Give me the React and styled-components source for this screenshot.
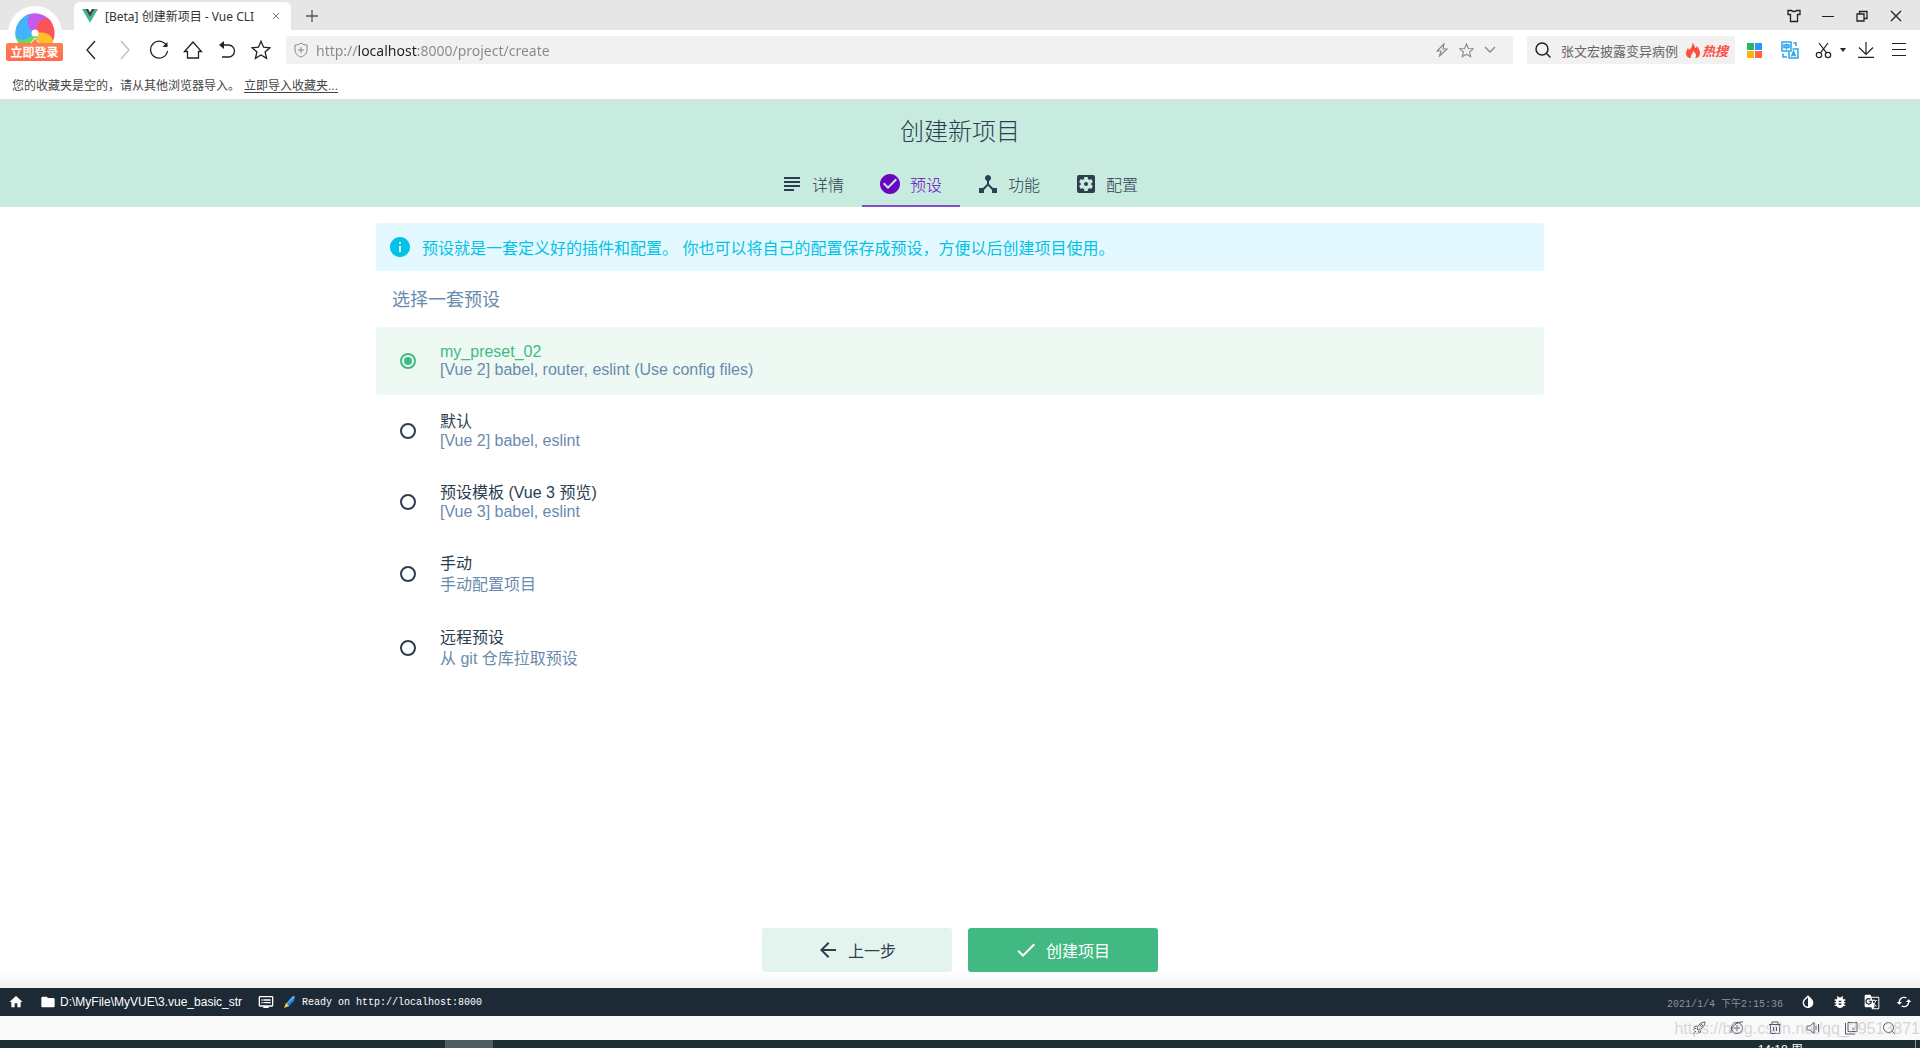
import { useState } from 'react';
import styled, { createGlobalStyle } from 'styled-components';
import {
  MdSubject,
  MdCheckCircle,
  MdDeviceHub,
  MdSettingsApplications,
  MdInfo,
  MdArrowBack,
  MdDone,
  MdHome,
  MdFolder,
  MdDvr,
  MdInvertColors,
  MdBugReport,
  MdGTranslate,
  MdCached,
} from 'react-icons/md';

const GlobalStyle = createGlobalStyle`
  * {
    box-sizing: border-box;
  }

  body {
    margin: 0;
    background: #ffffff;
    font-family: 'Liberation Sans', 'Noto Sans CJK SC', sans-serif;
    font-size: 16px;
    color: #2c3e50;
  }

  button,
  input {
    font: inherit;
    color: inherit;
    border: 0;
    padding: 0;
    margin: 0;
    background: none;
    outline: none;
  }

  button {
    cursor: pointer;
  }
`;

const Screen = styled.div`
  position: relative;
  display: flex;
  flex-direction: column;
  height: 100vh;
  padding-right: 8px;
  overflow: hidden;
`;

/* ---------- browser chrome ---------- */

const TabStrip = styled.div`
  display: flex;
  align-items: flex-end;
  height: 30px;
  padding-left: 74px;
  background: #e6e6e6;
  font-family: 'Noto Sans', 'Noto Sans CJK SC', sans-serif;
`;

const BrowserTab = styled.div`
  display: flex;
  align-items: center;
  width: 217px;
  height: 28px;
  padding: 0 10px 0 8px;
  gap: 7px;
  border-radius: 6px 6px 0 0;
  background: #ffffff;
  font-size: 12px;
  color: #333333;

  span {
    flex: 1;
    white-space: nowrap;
  }
`;

const IconButton = styled.button`
  display: flex;
  align-items: center;
  justify-content: center;
  flex: none;
  width: ${(props) => props.$width || 34}px;
  height: ${(props) => props.$height || 28}px;
  color: ${(props) => props.$color || '#222222'};
`;

const WindowControls = styled.div`
  display: flex;
  margin-left: auto;
  padding-right: 7px;
`;

const LoginButton = styled.button`
  position: absolute;
  left: 6px;
  top: 6px;
  display: flex;
  flex-direction: column;
  align-items: center;
  width: 57px;
  height: 55px;
`;

const LoginLabel = styled.span`
  position: absolute;
  left: 0;
  bottom: 0;
  width: 100%;
  height: 18px;
  border-radius: 2px;
  background: linear-gradient(#ff8152, #ff6a50);
  color: #ffffff;
  font-family: 'Noto Sans CJK SC', sans-serif;
  font-size: 12px;
  font-weight: 700;
  line-height: 18px;
  text-align: center;
`;

const Toolbar = styled.div`
  display: flex;
  align-items: center;
  height: 40px;
  padding: 0 8px 0 74px;
`;

const AddressBar = styled.label`
  display: flex;
  align-items: center;
  flex: 1;
  height: 28px;
  margin: 0 14px 0 8px;
  padding: 0 11px 0 8px;
  border-radius: 2px;
  background: #f1f1f1;
  color: #888888;
`;

/* scheme and path are greyed out, the host stays dark */
const AddressInput = styled.input`
  flex: 1;
  min-width: 0;
  height: 28px;
  margin-left: 8px;
  font-family: 'Noto Sans', 'Noto Sans CJK SC', sans-serif;
  font-size: 14px;
  color: transparent;
  background: linear-gradient(90deg, #888888 42px, #222222 42px 102px, #888888 102px);
  background-clip: text;
  -webkit-background-clip: text;
`;

const SearchBox = styled.label`
  display: flex;
  align-items: center;
  width: 208px;
  height: 28px;
  padding: 0 7px 0 8px;
  border-radius: 2px;
  background: #f1f1f1;
  color: #222222;
`;

const SearchInput = styled.input`
  flex: 1;
  min-width: 0;
  margin-left: 9px;
  font-family: 'Noto Sans CJK SC', sans-serif;
  font-size: 13px;

  &::placeholder {
    color: #666666;
    opacity: 1;
  }
`;

const HotLink = styled.a`
  display: flex;
  align-items: center;
  gap: 2px;
  color: #ff4c40;
  font-family: 'Noto Sans CJK SC', sans-serif;
  font-size: 13px;
  font-style: italic;
  font-weight: 700;
  text-decoration: none;
`;

const ToolbarExtras = styled.div`
  display: flex;
  align-items: center;
  margin-left: 2px;
`;

const Bookmarks = styled.div`
  display: flex;
  align-items: center;
  gap: 4px;
  height: 30px;
  padding: 0 0 1px 12px;
  border-bottom: 1px solid #e3e3e3;
  font-size: 12px;
  color: #444444;

  a {
    color: inherit;
    text-underline-offset: 2px;
  }
`;

/* ---------- project creation page ---------- */

const Header = styled.header`
  height: 107px;
  background: #c7ebdf;
`;

const Title = styled.h1`
  margin: 0;
  height: 63px;
  font-size: 24px;
  font-weight: 300;
  line-height: 63px;
  text-align: center;
`;

const Tabs = styled.nav`
  display: flex;
  justify-content: center;
`;

const Tab = styled.button`
  display: flex;
  align-items: center;
  gap: 8px;
  height: 44px;
  padding: 0 18px 0 16px;
  border-bottom: 2px solid ${(props) => (props.$active ? '#7f50c8' : 'transparent')};
  color: ${(props) => (props.$active ? '#6806c1' : '#2c3e50')};
  font-weight: 300;
`;

const Content = styled.main`
  flex: 1;
  width: 100%;
  max-width: 1200px;
  margin: 0 auto;
  padding: 16px;
`;

const Alert = styled.div`
  display: flex;
  align-items: center;
  gap: 10px;
  height: 48px;
  padding: 0 12px;
  border-radius: 3px;
  background: #e4f9ff;
  color: #03c2e6;
`;

const PresetGroup = styled.fieldset`
  margin: 0;
  padding: 0;
  border: 0;
`;

const GroupTitle = styled.legend`
  height: 56px;
  padding: 0 16px;
  color: #6a8bad;
  font-size: 18px;
  line-height: 58px;
`;

const PresetRow = styled.label`
  display: flex;
  align-items: center;
  gap: 24px;
  padding: 16px 24px;
  border-radius: 3px;
  background: ${(props) => (props.$selected ? '#eef9f4' : 'transparent')};
  cursor: pointer;
`;

const Radio = styled.input`
  appearance: none;
  flex: none;
  width: 16px;
  height: 16px;
  border: 2px solid #2c3e50;
  border-radius: 50%;

  &:checked {
    border-color: #42b983;
    background: #42b983;
    background-clip: content-box;
    padding: 2px;
  }
`;

const PresetName = styled.div`
  line-height: ${(props) => (props.$cjk ? 21 : 18)}px;
  color: ${(props) => (props.$selected ? '#42b983' : '#2c3e50')};
`;

const PresetDescription = styled.div`
  line-height: ${(props) => (props.$cjk ? 21 : 18)}px;
  color: #6a8bad;
`;

const Actions = styled.div`
  display: flex;
  justify-content: center;
  gap: 16px;
  padding: 16px;
  background: linear-gradient(transparent 80%, #f0f0f0);
`;

const ActionButton = styled.button`
  display: flex;
  align-items: center;
  justify-content: center;
  gap: 8px;
  width: 190px;
  height: 44px;
  padding-right: 2px;
  border-radius: 3px;
  background: ${(props) => (props.$primary ? '#42b983' : '#e3f4ee')};
  color: ${(props) => (props.$primary ? '#ffffff' : '#2c3e50')};
`;

const StatusBar = styled.footer`
  display: flex;
  align-items: center;
  height: 28px;
  padding: 0 8px;
  background: #1d2935;
  color: #ffffff;
  font-size: 12px;
`;

const StatusItem = styled.button`
  display: flex;
  align-items: center;
  gap: 4px;
  margin-right: ${(props) => props.$after || 0}px;
`;

const LogLine = styled.span`
  display: flex;
  align-items: center;
  gap: 6px;
  font-family: 'Liberation Mono', 'Noto Sans CJK SC', monospace;
  font-size: 10px;
`;

const StatusRight = styled.div`
  display: flex;
  align-items: center;
  gap: 16px;
  margin-left: auto;

  time {
    margin-right: 1px;
    color: #8c949b;
    font-family: 'Liberation Mono', 'Noto Sans CJK SC', monospace;
    font-size: 10px;
  }
`;

/* ---------- bottom of the browser and the system taskbar ---------- */

const BrowserFooter = styled.div`
  display: flex;
  align-items: center;
  justify-content: flex-end;
  position: relative;
  height: 24px;
  padding-right: 12px;
  background: #f9f9f9;
`;

const Watermark = styled.span`
  position: absolute;
  right: 0;
  top: 2px;
  color: rgba(190, 190, 190, 0.6);
  font-size: 16px;
  line-height: 22px;
  pointer-events: none;
`;

const Taskbar = styled.div`
  display: flex;
  height: 8px;
  padding-right: 4px;
  overflow: hidden;
  background: #1c3033;
`;

const TaskbarApp = styled.div`
  width: 48px;
  margin-left: 445px;
  background: #4d5d60;
`;

const Clock = styled.time`
  margin-left: auto;
  padding: 3px 112px 0 0;
  border-right: 1px solid #8b9799;
  color: #ffffff;
  font-size: 12px;
  line-height: 14px;
`;

const Line = ({ w = 20, h = w, box = `0 0 ${w} ${h}`, sw = 1.3, children }) => (
  <svg width={w} height={h} viewBox={box} fill="none" stroke="currentColor" strokeWidth={sw}>
    {children}
  </svg>
);

const VueLogo = () => (
  <svg width="16" height="14" viewBox="0 0 16 14">
    <path d="M0 0h3.2L8 8.3 12.8 0H16L8 13.8z" fill="#41b883" />
    <path d="M3.2 0h3L8 3.2 9.8 0h3L8 8.3z" fill="#35495e" />
  </svg>
);

const PETALS = ['#c25cf0', '#fb5458', '#ffc02c', '#62dc5c', '#42b4fb'];

const BrowserLogo = () => (
  <svg width="54" height="54" viewBox="0 0 54 54">
    <circle cx="27" cy="27" r="27" fill="#ffffff" />
    {PETALS.map((color, i) => (
      <path
        key={color}
        transform={`translate(27 27) rotate(${i * 72})`}
        d="M0 0C-9-4-13-11-10-17A20 20 0 0 1 17-10C9-13 1-9 0 0z"
        fill={color}
      />
    ))}
    <circle cx="27" cy="27" r="3.500" fill="#ffffff" />
    <path d="M27 32l5 6H22z" fill="#ff8152" stroke="#ffffff" strokeWidth="1" />
  </svg>
);

const STAR = 'M9 1.2l2.3 5.3 5.7.5-4.3 3.8 1.3 5.7L9 13.5l-5 3 1.3-5.7L1 7l5.7-.5z';

const WINDOW_BUTTONS = [
  { label: '皮肤', icon: <Line w={14}><path d="M4.5 1.5H1v4h2.500V12.500h7V5.500H13v-4H9.500c-1 1.300-4 1.300-5 0z" /></Line> },
  { label: '最小化', icon: <Line w={12} sw={1}><path d="M0 6.500h12" /></Line> },
  { label: '还原', icon: <Line w={12}><path d="M1 4h7v7H1zM3.500 4V1.500h7.500v7H8" /></Line> },
  { label: '关闭', icon: <Line w={12}><path d="M1 1l10 10M11 1L1 11" /></Line> },
];

const NAV_BUTTONS = [
  { label: '后退', icon: <Line><path d="M14 1L6 10l8 9" /></Line> },
  { label: '前进', color: '#bbbbbb', icon: <Line><path d="M6 1l8 9-8 9" /></Line> },
  { label: '刷新', icon: <Line><path d="M17.800 6A8.500 8.500 0 1 0 18.500 11" /><path d="M18.500 2v5h-5z" fill="currentColor" stroke="none" /></Line> },
  { label: '主页', icon: <Line><path d="M1.500 11.500L10 2l8.500 9.500h-3V18h-11v-6.500z" /></Line> },
  { label: '恢复', icon: <Line><path d="M5 5h6.500a6 6 0 0 1 0 12H5" /><path d="M7 1v8L2 5z" fill="currentColor" stroke="none" /></Line> },
  { label: '收藏', icon: <Line w={20} sw={1.200} box="0 0 18 18"><path d={STAR} /></Line> },
];

const FOOTER_BUTTONS = [
  { label: '加速', icon: <Line w={14} sw={1}><path d="M5 8c1-4 4-7 8-7 0 4-3 7-7 8zM5 5L2 6l2 2M9 9l-1 3-2-2M4 10l-3 3M6.500 11.500L5 13M2.500 7.500L1 9" /><circle cx="9.500" cy="4.500" r="1" /></Line> },
  { label: '新建', icon: <Line w={14} sw={1}><circle cx="7" cy="7" r="5.500" /><path d="M7 4v6M4 7h6M1 12C0 7 7 0 13 1" /></Line> },
  { label: '清理', icon: <Line w={14} sw={1}><path d="M1 3.500h12M4 3V1h6v2M2.500 3.500v9h9v-9M5.500 6v4M8.500 6v4" /></Line> },
  { label: '静音', icon: <Line w={14} sw={1}><path d="M1 5h3l4-3.500v11L4 9H1zM10 5v4M12.500 3v8" /></Line> },
  { label: '窗口', icon: <Line w={14} sw={1}><path d="M4 1.500h9v9H4zM1.500 2v11H11M8 8h2.500" /></Line> },
  { label: '缩放', icon: <Line w={14} sw={1}><circle cx="6.500" cy="6.500" r="5" /><path d="M10 10l3 3" /></Line> },
];

const STEPS = [
  { label: '详情', Icon: MdSubject },
  { label: '预设', Icon: MdCheckCircle, active: true },
  { label: '功能', Icon: MdDeviceHub },
  { label: '配置', Icon: MdSettingsApplications },
];

const PRESETS = [
  { id: 'my_preset_02', name: 'my_preset_02', description: '[Vue 2] babel, router, eslint (Use config files)' },
  { id: 'default', name: '默认', description: '[Vue 2] babel, eslint' },
  { id: 'vue3', name: '预设模板 (Vue 3 预览)', description: '[Vue 3] babel, eslint' },
  { id: 'manual', name: '手动', description: '手动配置项目' },
  { id: 'remote', name: '远程预设', description: '从 git 仓库拉取预设' },
];

const hasCjk = (text) => /[\u4e00-\u9fff]/.test(text);

function BrowserChrome() {
  return (
    <>
      <TabStrip>
        <BrowserTab>
          <VueLogo />
          <span>[Beta] 创建新项目 - Vue CLI</span>
          <IconButton $width={10} aria-label="关闭标签页" $color="#777777">
            <Line w={8} sw={1}><path d="M1 1l6 6M7 1L1 7" /></Line>
          </IconButton>
        </BrowserTab>
        <IconButton $width={42} aria-label="新标签页" $color="#555555">
          <Line w={12}><path d="M6 0v12M0 6h12" /></Line>
        </IconButton>
        <WindowControls>
          {WINDOW_BUTTONS.map(({ label, icon }) => (
            <IconButton key={label} aria-label={label}>{icon}</IconButton>
          ))}
        </WindowControls>
      </TabStrip>
      <Toolbar>
        {NAV_BUTTONS.map(({ label, icon, color }) => (
          <IconButton key={label} aria-label={label} $color={color}>{icon}</IconButton>
        ))}
        <AddressBar>
          <Line w={14} h={16} sw={1}>
            <path d="M7 1c2 1.500 4 2 6 2v5c0 3-2 5.500-6 7-4-1.500-6-4-6-7V3c2 0 4-.5 6-2zM7 5v6M4 8h6" />
          </Line>
          <AddressInput aria-label="地址" defaultValue="http://localhost:8000/project/create" />
          <IconButton $width={24} aria-label="极速模式" $color="#888888">
            <Line w={12} h={14} sw={1.200}><path d="M8 1L1 8h4l-1.500 5L11 6H7z" /></Line>
          </IconButton>
          <IconButton $width={24} aria-label="收藏此页" $color="#888888">
            <Line w={15} box="0 0 18 18"><path d={STAR} /></Line>
          </IconButton>
          <IconButton $width={24} aria-label="更多地址" $color="#888888">
            <Line w={12} h={8}><path d="M1 1l5 5 5-5" /></Line>
          </IconButton>
        </AddressBar>
        <SearchBox>
          <Line w={17} sw={1.500}><circle cx="7" cy="7" r="6" /><path d="M11.500 11.500l4 4" /></Line>
          <SearchInput aria-label="搜索" placeholder="张文宏披露变异病例" />
          <HotLink href="#hot">
            <svg width="14" height="15" viewBox="0 0 14 15">
              <path d="M6 0c3 2 3 4 3 5 1 0 2-1 2-2 2 3 3 5 3 7 0 3-2 5-5 5 2-2 1-5-2-7 0 3-3 4-2 7-3 0-5-2-5-5 0-2 1-3 2-5l1 2c2-2 4-4 3-7z" fill="#ff4c40" />
            </svg>
            热搜
          </HotLink>
        </SearchBox>
        <ToolbarExtras>
          <IconButton $width={35} aria-label="应用">
            <svg width="15" height="15" viewBox="0 0 15 15">
              <path d="M0 0h7v7H0z" fill="#25b864" />
              <path d="M8 0h7v7H8z" fill="#2b95ff" />
              <path d="M0 8h7v7H0z" fill="#ffb114" />
              <path d="M8 8h7v7H8z" fill="#ff6542" />
            </svg>
          </IconButton>
          <IconButton $width={35} aria-label="翻译" $color="#2ea4e6">
            <Line w={18} sw={1.500}>
              <path d="M1 1h9v9H1zM3 4h5v2.500H3zM5.500 2.500v6M8 11v6h9V8h-5.500M10.500 15.500l2-5 2 5M11 14h3M12.500 2H15v3M2 12.500V16h4" />
            </Line>
          </IconButton>
          <IconButton $width={33} aria-label="截图">
            <Line w={17} sw={1.200}>
              <circle cx="4" cy="13" r="2.700" />
              <circle cx="13" cy="13" r="2.700" />
              <path d="M4 1l7.500 9.800M13 1L5.500 10.800" />
            </Line>
          </IconButton>
          <IconButton $width={6} aria-label="截图选项">
            <svg width="6" height="4" viewBox="0 0 6 4"><path d="M0 0h6L3 4z" fill="currentColor" /></svg>
          </IconButton>
          <IconButton $width={40} aria-label="下载">
            <Line w={16} sw={1.200}><path d="M8 0v12M1 5.500l7 7 7-7M0 15.300h16" /></Line>
          </IconButton>
          <IconButton $width={26} aria-label="菜单">
            <Line w={14} sw={1}><path d="M0 .5h14M0 6.500h14M0 12.500h14" /></Line>
          </IconButton>
        </ToolbarExtras>
      </Toolbar>
      <Bookmarks>
        <span>您的收藏夹是空的，请从其他浏览器导入。</span>
        <a href="#import">立即导入收藏夹...</a>
      </Bookmarks>
      <LoginButton>
        <BrowserLogo />
        <LoginLabel>立即登录</LoginLabel>
      </LoginButton>
    </>
  );
}

function App() {
  const [selected, setSelected] = useState('my_preset_02');

  return (
    <Screen>
      <GlobalStyle />
      <BrowserChrome />
      <Header>
        <Title>创建新项目</Title>
        <Tabs>
          {STEPS.map(({ label, Icon, active }) => (
            <Tab key={label} $active={active}>
              <Icon size={24} />
              {label}
            </Tab>
          ))}
        </Tabs>
      </Header>
      <Content>
        <Alert>
          <MdInfo size={24} />
          <span>预设就是一套定义好的插件和配置。 你也可以将自己的配置保存成预设，方便以后创建项目使用。</span>
        </Alert>
        <PresetGroup>
          <GroupTitle>选择一套预设</GroupTitle>
          {PRESETS.map(({ id, name, description }) => (
            <PresetRow key={id} $selected={selected === id}>
              <Radio
                type="radio"
                name="preset"
                checked={selected === id}
                onChange={() => setSelected(id)}
              />
              <div>
                <PresetName $cjk={hasCjk(name)} $selected={selected === id}>{name}</PresetName>
                <PresetDescription $cjk={hasCjk(description)}>{description}</PresetDescription>
              </div>
            </PresetRow>
          ))}
        </PresetGroup>
      </Content>
      <Actions>
        <ActionButton>
          <MdArrowBack size={24} />
          上一步
        </ActionButton>
        <ActionButton $primary>
          <MdDone size={24} />
          创建项目
        </ActionButton>
      </Actions>
      <StatusBar>
        <StatusItem $after={16} aria-label="主页"><MdHome size={16} /></StatusItem>
        <StatusItem $after={16}>
          <MdFolder size={16} />
          D:\MyFile\MyVUE\3.vue_basic_str
        </StatusItem>
        <StatusItem $after={8} aria-label="日志"><MdDvr size={16} /></StatusItem>
        <LogLine>
          <svg width="14" height="14" viewBox="0 0 14 14">
            <path d="M11 1l2 1-1 4-6 6-3-2z" fill="#1f7fe0" />
            <path d="M11 1l2 1-8 7-2 1z" fill="#5fb6ff" />
            <path d="M4 8l3 3-5 2z" fill="#f3d13b" />
          </svg>
          Ready on http://localhost:8000
        </LogLine>
        <StatusRight>
          <time>2021/1/4 下午2:15:36</time>
          <StatusItem aria-label="切换主题"><MdInvertColors size={16} /></StatusItem>
          <StatusItem aria-label="报告问题"><MdBugReport size={16} /></StatusItem>
          <StatusItem aria-label="翻译"><MdGTranslate size={16} /></StatusItem>
          <StatusItem aria-label="重新加载"><MdCached size={16} /></StatusItem>
        </StatusRight>
      </StatusBar>
      <BrowserFooter>
        {FOOTER_BUTTONS.map(({ label, icon }) => (
          <IconButton key={label} $width={38} $height={24} $color="#555566" aria-label={label}>{icon}</IconButton>
        ))}
        <Watermark>https://blog.csdn.net/qq_39513871</Watermark>
      </BrowserFooter>
      <Taskbar>
        <TaskbarApp />
        <Clock>14:18 周</Clock>
      </Taskbar>
    </Screen>
  );
}

export default App;
